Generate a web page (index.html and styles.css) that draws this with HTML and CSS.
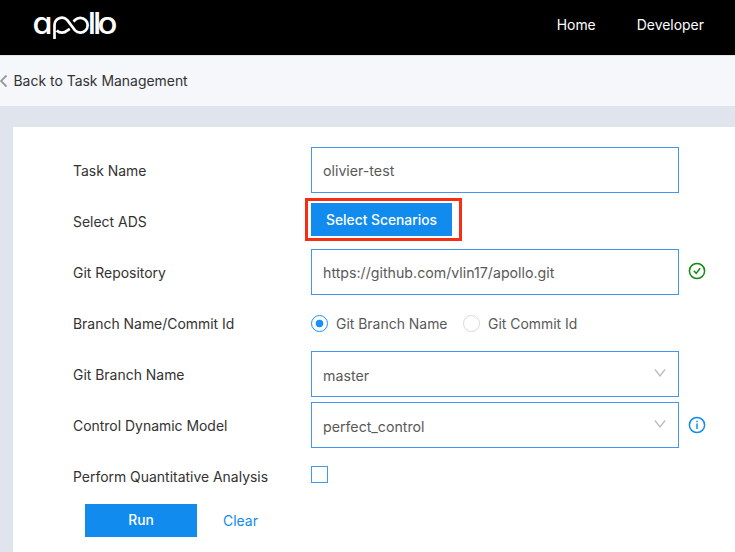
FILE: index.html
```html
<!DOCTYPE html>
<html lang="en">
<head>
<meta charset="utf-8">
<title>Apollo</title>
<link rel="stylesheet" href="styles.css">
</head>
<body>
<header class="topbar">
  <svg class="logo" width="86" height="34" viewBox="0 0 86 34" role="img" aria-label="apollo">
    <text class="logo-text" x="-0.500" y="26.500" textLength="20" lengthAdjust="spacingAndGlyphs">a</text>
    <path d="M21.500 32V18.200A7.400 7.400 0 0 1 34.300 13.100L42 23.400A7.400 7.400 0 1 0 42 13L40.500 14.600M36.800 21.800L34.200 23.500A7.400 7.400 0 0 1 23.700 23.500" fill="none" stroke="#fff" stroke-width="2.700"/>
    <text class="logo-text" transform="translate(55 0) scale(1.1 1)" x="-0.200 4.600 8.700" y="26.500">llo</text>
  </svg>
  <nav class="nav"><a>Home</a><a>Developer</a></nav>
</header>
<div class="backbar">
  <svg class="back-icon" width="9" height="14" viewBox="0 0 9 14"><path d="M7.500 1.500L2 7l5.500 5.500" fill="none" stroke="#999" stroke-width="1.800"/></svg>
  <span>Back to Task Management</span>
</div>
<main class="page">
  <form class="card">
    <div class="row"><label class="label">Task Name</label><div class="field"><span>olivier-test</span></div></div>
    <div class="row"><label class="label">Select ADS</label><div class="highlight"><button type="button" class="btn select-btn">Select Scenarios</button></div></div>
    <div class="row"><label class="label">Git Repository</label><div class="field"><span>https://github.com/vlin17/apollo.git</span></div>
      <svg class="status" width="18" height="18" viewBox="0 0 18 18" fill="none" stroke="#108a10" stroke-width="1.500"><circle cx="9" cy="9" r="7.600"/><path d="M5.900 8.700l2.300 2.700 3.900-5.200"/></svg></div>
    <div class="row"><label class="label">Branch Name/Commit Id</label><div class="radios"><span class="radio checked"></span><span class="first">Git Branch Name</span><span class="radio"></span><span>Git Commit Id</span></div></div>
    <div class="row"><label class="label">Git Branch Name</label><div class="field select"><span>master</span><svg class="chev" width="12" height="10" viewBox="0 0 12 10"><path d="M1 1.500l5 6.500 5-6.500" fill="none" stroke="#bbb" stroke-width="1.300"/></svg></div></div>
    <div class="row"><label class="label">Control Dynamic Model</label><div class="field select"><span>perfect_control</span><svg class="chev" width="12" height="10" viewBox="0 0 12 10"><path d="M1 1.500l5 6.500 5-6.500" fill="none" stroke="#bbb" stroke-width="1.300"/></svg></div>
      <svg class="status info" width="18" height="18" viewBox="0 0 18 18" fill="none" stroke="#118cee" stroke-width="1.500"><circle cx="9" cy="9" r="7.600"/><path d="M9 7.500v5.500M9 4.800v1.500"/></svg></div>
    <div class="row"><label class="label">Perform Quantitative Analysis</label><span class="checkbox"></span></div>
    <div class="actions"><button type="button" class="btn run">Run</button><a class="clear">Clear</a></div>
  </form>
</main>
</body>
</html>
```
FILE: styles.css
```css
* { box-sizing: border-box; }
body {
  margin: 0;
  height: 552px;
  overflow: hidden;
  background: #e0e5ed;
  color: #333;
  font: 13.95px/20px Inter, "Liberation Sans", sans-serif;
  white-space: nowrap;
}
.topbar {
  height: 55px;
  background: #000;
  display: flex;
  justify-content: space-between;
  padding: 7px 31px 0 33px;
}
.logo { overflow: visible; }
.logo-text {
  font-family: Inter, sans-serif;
  font-size: 30px;
  font-weight: 500;
  fill: #fff;
  font-feature-settings: "cv11" 1;
}
.nav {
  display: flex;
  gap: 41px;
  padding-top: 8px;
  color: #fff;
}
.backbar {
  height: 51px;
  background: #f5f7fb;
  border-top: 1px solid #e4e6ea;
  display: flex;
  align-items: center;
  padding-bottom: 1px;
}
.back-icon { margin-left: -1px; margin-right: 5.5px; }
.page { padding: 20.5px 0 0 13px; }
.card {
  height: 430px;
  background: #fff;
  padding: 17.5px 0 0 60px;
}
.row {
  height: 51px;
  display: flex;
  align-items: center;
}
.label { width: 238px; flex: none; padding-top: 2px; }
.field {
  width: 368px;
  height: 46px;
  border: 1.5px solid #4396ee;
  padding: 1px 12px 0 11px;
  display: flex;
  align-items: center;
  justify-content: space-between;
  color: #595959;
  font-size: 14.2px;
}
.field span { padding-top: 1px; }
.field.select span { padding-top: 3px; }
.chev { margin-bottom: 2px; }
.status { margin-left: 9px; margin-bottom: 1px; }
.status.info { margin-bottom: 0; margin-top: 1px; }
.highlight {
  width: 157px;
  height: 43px;
  margin: -3px 0 0 -6px;
  border: 3px solid #f52f13;
  padding: 2px 0 0 3px;
}
.btn {
  display: block;
  border: 0;
  border-radius: 0;
  padding: 0;
  height: 33px;
  background: #118cee;
  color: #fff;
  font: 500 13.8px/33px Inter, sans-serif;
}
.select-btn { width: 141px; line-height: 34px; }
.radios {
  display: flex;
  align-items: center;
  padding-top: 1px;
  color: #595959;
}
.radios span:not(.radio) { padding-top: 1px; }
.radio {
  width: 17px;
  height: 17px;
  border: 1px solid #d9d9d9;
  border-radius: 50%;
  margin-right: 8px;
}
.checked {
  border-color: #1890ff;
  background: radial-gradient(circle, #1890ff 3.5px, transparent 4.2px);
}
.first { width: 112px; margin-right: 15px; }
.checkbox {
  width: 17px;
  height: 17px;
  border: 1.5px solid #3c9df0;
  margin-bottom: 3px;
}
.actions {
  display: flex;
  align-items: center;
  padding: 3px 0 0 12px;
}
.run { width: 112px; }
.clear { margin-left: 26px; color: #118cee; }
```
